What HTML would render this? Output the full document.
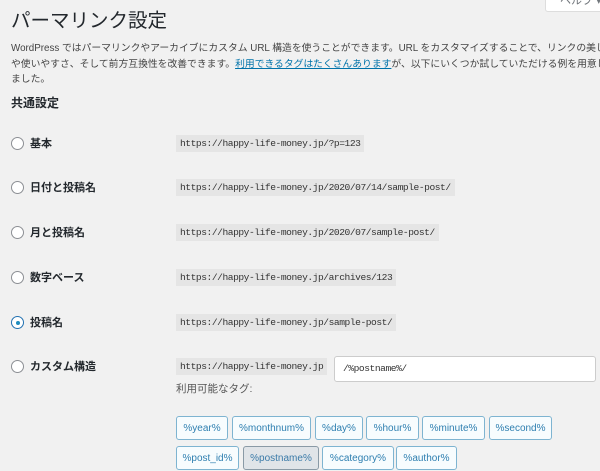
<!DOCTYPE html>
<html><head><meta charset="utf-8"><style>
body{margin:0;width:600px;height:466px;background:#f1f1f1;overflow:hidden;position:relative;font-family:"Liberation Sans","Noto Sans CJK JP",sans-serif;color:#444}
.a{position:absolute;white-space:nowrap}
.r{position:absolute;left:11px;width:13px;height:13px;border:1px solid #8c8f94;border-radius:50%;background:#fff;box-sizing:border-box}
.l{position:absolute;left:30px;font-size:11px;font-weight:bold;color:#23282d}
.c{position:absolute;left:176px;height:17px;line-height:17px;padding:0 4px;background:#e5e5e5;font-family:"Liberation Mono",monospace;font-size:9.6px;letter-spacing:-0.45px;color:#333}
.b{position:absolute;height:24px;line-height:24px;border:1px solid #7eb4d1;border-radius:3px;background:#f7fcfe;color:#2e7fb0;font-size:10px;text-align:center;box-sizing:border-box}
</style></head><body>
<div class="a" style="left:545px;top:-8px;width:60px;height:20px;background:#fff;border:1px solid #ddd;border-radius:3px;font-size:11px;color:#72777c;padding-left:14px;box-sizing:border-box;line-height:16px">ヘルプ ▾</div>
<div class="a" style="left:11px;top:4px;font-size:19.5px;color:#23282d">パーマリンク設定</div>
<div class="a" style="left:11px;top:41px;font-size:9.8px;line-height:15.5px;color:#444">WordPress ではパーマリンクやアーカイブにカスタム URL 構造を使うことができます。URL をカスタマイズすることで、リンクの美し<br>や使いやすさ、そして前方互換性を改善できます。<span style="color:#0073aa;text-decoration:underline">利用できるタグはたくさんあります</span>が、以下にいくつか試していただける例を用意し<br>ました。</div>
<div class="a" style="left:11px;top:94px;font-size:12px;font-weight:bold;color:#23282d">共通設定</div>

<div class="r" style="top:137px"></div><div class="l a" style="top:135px">基本</div><div class="c a" style="top:135px">https://happy-life-money.jp/?p=123</div>
<div class="r" style="top:181px"></div><div class="l a" style="top:179px">日付と投稿名</div><div class="c a" style="top:179px">https://happy-life-money.jp/2020/07/14/sample-post/</div>
<div class="r" style="top:226px"></div><div class="l a" style="top:224px">月と投稿名</div><div class="c a" style="top:224px">https://happy-life-money.jp/2020/07/sample-post/</div>
<div class="r" style="top:271px"></div><div class="l a" style="top:269px">数字ベース</div><div class="c a" style="top:269px">https://happy-life-money.jp/archives/123</div>
<div class="r" style="top:316px;border-color:#2271b1"><div style="position:absolute;left:3.5px;top:3.5px;width:4px;height:4px;border-radius:50%;background:#1e8cbe"></div></div><div class="l a" style="top:314px">投稿名</div><div class="c a" style="top:314px">https://happy-life-money.jp/sample-post/</div>
<div class="r" style="top:360px"></div><div class="l a" style="top:358px">カスタム構造</div><div class="c a" style="top:358px">https://happy-life-money.jp</div>
<div class="a" style="left:334px;top:356px;width:262px;height:26px;background:#fff;border:1px solid #ccc;border-radius:3px;box-sizing:border-box;font-family:'Liberation Mono',monospace;font-size:9.6px;letter-spacing:-0.45px;line-height:24px;padding-left:8px;color:#333">/%postname%/</div>
<div class="a" style="left:176px;top:381px;font-size:10.5px;color:#555">利用可能なタグ:</div>

<div class="b" style="left:176px;top:416px;width:52px">%year%</div>
<div class="b" style="left:232px;top:416px;width:79px">%monthnum%</div>
<div class="b" style="left:315px;top:416px;width:48px">%day%</div>
<div class="b" style="left:366px;top:416px;width:53px">%hour%</div>
<div class="b" style="left:422px;top:416px;width:63px">%minute%</div>
<div class="b" style="left:489px;top:416px;width:63px">%second%</div>
<div class="b" style="left:176px;top:446px;width:63px">%post_id%</div>
<div class="b" style="left:243px;top:446px;width:76px;background:#e0e4e8;border-color:#8a9aa6;color:#3a7aa8">%postname%</div>
<div class="b" style="left:322px;top:446px;width:72px">%category%</div>
<div class="b" style="left:396px;top:446px;width:61px">%author%</div>
</body></html>
